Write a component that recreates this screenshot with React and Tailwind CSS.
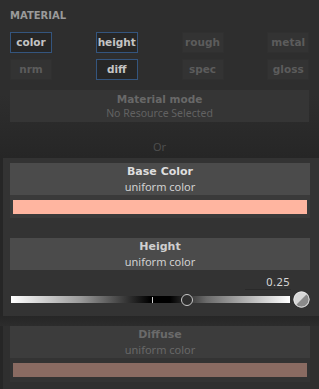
export default function App() {
  const tags = [
    { label: "color", on: true },
    { label: "height", on: true },
    { label: "rough", on: false },
    { label: "metal", on: false },
    { label: "nrm", on: false },
    { label: "diff", on: true },
    { label: "spec", on: false },
    { label: "gloss", on: false },
  ];

  return (
    <div className="h-[389px] w-[319px] overflow-hidden bg-[#2c2c2c] font-['Noto_Sans',sans-serif]">
      {/* top */}
      <div className="bg-gradient-to-b from-[#2e2e2e] from-60% to-[#262626] px-[10px] pt-[8px]">
        <div className="h-[16px] font-['DejaVu_Sans',sans-serif] text-[10px] font-bold leading-[16px] text-[#9a9a9a]">
          MATERIAL
        </div>
        <div className="mt-[8px] grid grid-cols-4 gap-x-[44px] gap-y-[6px]">
          {tags.map((t) => (
            <div
              key={t.label}
              className={
                t.on
                  ? "flex h-[21px] w-[42px] items-center justify-center border border-[#34557e] bg-[#262626] font-['DejaVu_Sans',sans-serif] text-[10.5px] font-bold text-[#c4c4c4]"
                  : "flex h-[21px] w-[42px] items-center justify-center border border-[#303030] bg-[#333333] font-['DejaVu_Sans',sans-serif] text-[10.5px] font-bold text-[#5c5c5c]"
              }
            >
              {t.label}
            </div>
          ))}
        </div>
        <div className="mt-[10px] flex h-[32px] flex-col items-center justify-center bg-[#353535]">
          <div className="font-['DejaVu_Sans',sans-serif] text-[10.5px] font-bold leading-[14px] text-[#686868]">
            Material mode
          </div>
          <div className="text-[10.5px] leading-[15px] text-[#626262]">No Resource Selected</div>
        </div>
        <div className="flex h-[36px] items-end justify-center pb-[3px] text-[11px] text-[#4e4e4e]">Or</div>
      </div>

      {/* active channels */}
      <div className="border-l-[3px] border-[#262626] bg-[#333333] pr-[9px] pl-[7px] pt-[5px]">
        <div className="flex h-[32px] flex-col items-center justify-center bg-[#4b4b4b]">
          <div className="font-['DejaVu_Sans',sans-serif] text-[11px] font-bold leading-[15px] text-[#dedede]">
            Base Color
          </div>
          <div className="text-[11px] leading-[15px] text-[#d2d2d2]">uniform color</div>
        </div>
        <div className="flex h-[23px] items-center bg-[#3a3a3a] px-[3px]">
          <div className="h-[14px] w-full bg-[#ffb5a0]" />
        </div>

        <div className="mt-[20px] flex h-[32px] flex-col items-center justify-center bg-[#4b4b4b]">
          <div className="font-['DejaVu_Sans',sans-serif] text-[11px] font-bold leading-[15px] text-[#d0d0d0]">
            Height
          </div>
          <div className="text-[11px] leading-[15px] text-[#d2d2d2]">uniform color</div>
        </div>
        <div className="flex h-[46px] flex-col">
          <div className="mt-[4px] flex justify-end pr-[19px]">
            <div className="h-[16px] w-[46px] border-b border-[#2a2a2a] pr-[1px] text-right text-[11px] leading-[16px] tracking-[0.5px] text-[#d8d8d8]">
              0.25
            </div>
          </div>
          <div className="mt-[1px] flex items-center">
            <div className="relative ml-[1px] h-[7px] w-[280px] bg-[linear-gradient(to_right,#ffffff,#9a9a9a_25%,#000000_50%,#000000_57%,#6a6a6a_70%,#ffffff)]">
              <div className="absolute top-[1px] left-[141px] h-[6px] w-px bg-[#d0d0d0]" />
              <div className="absolute top-[-2.5px] left-[170px] h-[12px] w-[12px] rounded-full border-[1.5px] border-[#c8c8c8] bg-[#2e2e2e]" />
            </div>
            <svg width="17" height="17" viewBox="0 0 17 17" className="ml-[3px]">
              <circle cx="8.5" cy="8.5" r="8" fill="#d8d8d8" />
              <path d="M14.2 2.8 A8 8 0 0 1 2.8 14.2 Z" fill="#8a8a8a" />
              <circle cx="8.5" cy="8.5" r="7.6" fill="none" stroke="#eeeeee" strokeWidth="0.8" />
            </svg>
          </div>
        </div>
      </div>

      <div className="h-[10px] bg-gradient-to-b from-[#262626] to-[#2c2c2c]" />

      {/* disabled channel */}
      <div className="border-l-[3px] border-[#262626] bg-[#2f2f2f] pr-[9px] pl-[7px]">
        <div className="flex h-[32px] flex-col items-center justify-center bg-[#3c3c3c]">
          <div className="font-['DejaVu_Sans',sans-serif] text-[11px] font-bold leading-[15px] text-[#6a6a6a]">
            Diffuse
          </div>
          <div className="text-[11px] leading-[15px] text-[#686868]">uniform color</div>
        </div>
        <div className="flex h-[24px] items-center bg-[#333333] px-[3px]">
          <div className="h-[14px] w-full bg-[#8a6b62]" />
        </div>
        <div className="h-[20px]" />
      </div>
    </div>
  );
}
